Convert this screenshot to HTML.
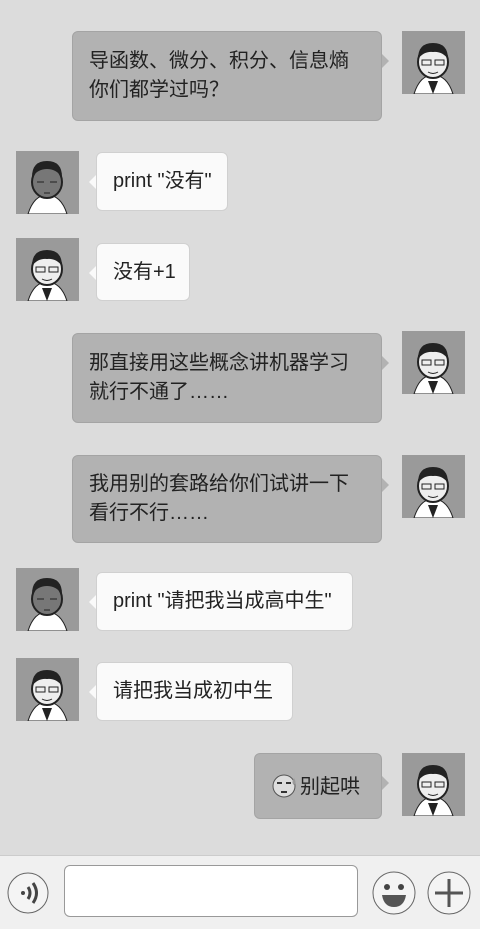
<!DOCTYPE html>
<html><head><meta charset="utf-8"><style>
body{margin:0;width:480px;height:928px;background:#dcdcdc;position:relative;overflow:hidden;font-family:"Liberation Sans","Noto Sans CJK SC",sans-serif;color:#222}
.b{position:absolute;border-radius:6px;font-size:20px;line-height:29px;box-sizing:border-box;padding:0 16px;white-space:nowrap}
.r{background:#b2b2b2;border:1px solid #a4a4a4}
.l{background:#fafafa;border:1px solid #d0d0d0}
.r:after{content:"";position:absolute;right:-8px;top:22px;border:7px solid transparent;border-left-color:#b2b2b2;border-right:0}
.l:before{content:"";position:absolute;left:-8px;top:22px;border:7px solid transparent;border-right-color:#fafafa;border-left:0}
.a{position:absolute;width:63px;height:63px;background:#9a9a9a}
.bar{position:absolute;left:0;top:855px;width:480px;height:73px;background:#f0f0f0;border-top:1px solid #ccc}
</style></head><body>
<svg width="0" height="0" style="position:absolute"><defs>
<g id="av"><path d="M12 63 Q18 44 31 44 Q45 44 51 63Z" fill="#fff" stroke="#222"/><path d="M26 50 L31 63 L36 50Z" fill="#222"/><ellipse cx="31" cy="31" rx="15" ry="16" fill="#eee" stroke="#222" stroke-width="2"/><path d="M16 28 Q16 12 31 12 Q46 12 46 28 Q40 20 31 21 Q22 20 16 28Z" fill="#222"/><rect x="20" y="29" width="9" height="5" fill="none" stroke="#222"/><rect x="33" y="29" width="9" height="5" fill="none" stroke="#222"/><path d="M26 41 Q31 44 36 41" stroke="#222" fill="none"/></g>
<g id="av2"><path d="M12 63 Q18 44 31 44 Q45 44 51 63Z" fill="#fff" stroke="#222"/><ellipse cx="31" cy="31" rx="15" ry="16" fill="#777" stroke="#222" stroke-width="2"/><path d="M16 26 Q16 10 31 10 Q46 10 46 26 Q40 18 31 18 Q22 18 16 26Z" fill="#222"/><path d="M21 31h7M34 31h7M28 42h6" stroke="#222"/></g>
</defs></svg>

<div class="b r" style="left:72px;top:31px;width:310px;height:90px;padding-top:15px">导函数、微分、积分、信息熵<br>你们都学过吗？</div>
<svg class="a" style="left:402px;top:31px"><use href="#av"/></svg>

<svg class="a" style="left:16px;top:151px"><use href="#av2"/></svg>
<div class="b l" style="left:96px;top:152px;width:132px;height:59px;padding-top:14px">print "没有"</div>

<svg class="a" style="left:16px;top:238px"><use href="#av"/></svg>
<div class="b l" style="left:96px;top:243px;width:94px;height:58px;padding-top:14px">没有+1</div>

<div class="b r" style="left:72px;top:333px;width:310px;height:90px;padding-top:15px">那直接用这些概念讲机器学习<br>就行不通了……</div>
<svg class="a" style="left:402px;top:331px"><use href="#av"/></svg>

<div class="b r" style="left:72px;top:455px;width:310px;height:88px;padding-top:14px">我用别的套路给你们试讲一下<br>看行不行……</div>
<svg class="a" style="left:402px;top:455px"><use href="#av"/></svg>

<svg class="a" style="left:16px;top:568px"><use href="#av2"/></svg>
<div class="b l" style="left:96px;top:572px;width:257px;height:59px;padding-top:14px">print "请把我当成高中生"</div>

<svg class="a" style="left:16px;top:658px"><use href="#av"/></svg>
<div class="b l" style="left:96px;top:662px;width:197px;height:59px;padding-top:14px">请把我当成初中生</div>

<div class="b r" style="left:254px;top:753px;width:128px;height:66px;padding:18px 0 0 15px"><span style="display:inline-block;width:30px;height:26px;vertical-align:-5px;position:relative"><svg width="30" height="26"><circle cx="14" cy="14" r="11" fill="#ddd" stroke="#555"/><path d="M7 11h5M16 11h5M11 20h6" stroke="#333" stroke-width="2"/><path d="M24 6 q3 5 0 7 q-3 -2 0 -7z" fill="#999"/></svg></span>别起哄</div>
<svg class="a" style="left:402px;top:753px"><use href="#av"/></svg>

<div class="bar">
<svg style="position:absolute;left:7px;top:16px" width="42" height="42"><circle cx="21" cy="21" r="20" fill="#f4f4f4" stroke="#666"/><circle cx="16" cy="21" r="2" fill="#444"/><path d="M21 15 Q25 21 21 27M26 11 Q33 21 26 31" stroke="#444" stroke-width="3" fill="none"/></svg>
<div style="position:absolute;left:64px;top:9px;width:294px;height:52px;background:#fff;border:1px solid #999;border-radius:6px;box-sizing:border-box"></div>
<svg style="position:absolute;left:372px;top:15px" width="44" height="44"><circle cx="22" cy="22" r="21" fill="#f4f4f4" stroke="#666"/><circle cx="15" cy="16" r="3" fill="#444"/><circle cx="29" cy="16" r="3" fill="#444"/><path d="M10 24 H34 Q32 36 22 36 Q12 36 10 24Z" fill="#555"/></svg>
<svg style="position:absolute;left:427px;top:15px" width="44" height="44"><circle cx="22" cy="22" r="21" fill="#f4f4f4" stroke="#666"/><path d="M22 8V36M8 22H36" stroke="#555" stroke-width="3"/></svg>
</div>
</body></html>
